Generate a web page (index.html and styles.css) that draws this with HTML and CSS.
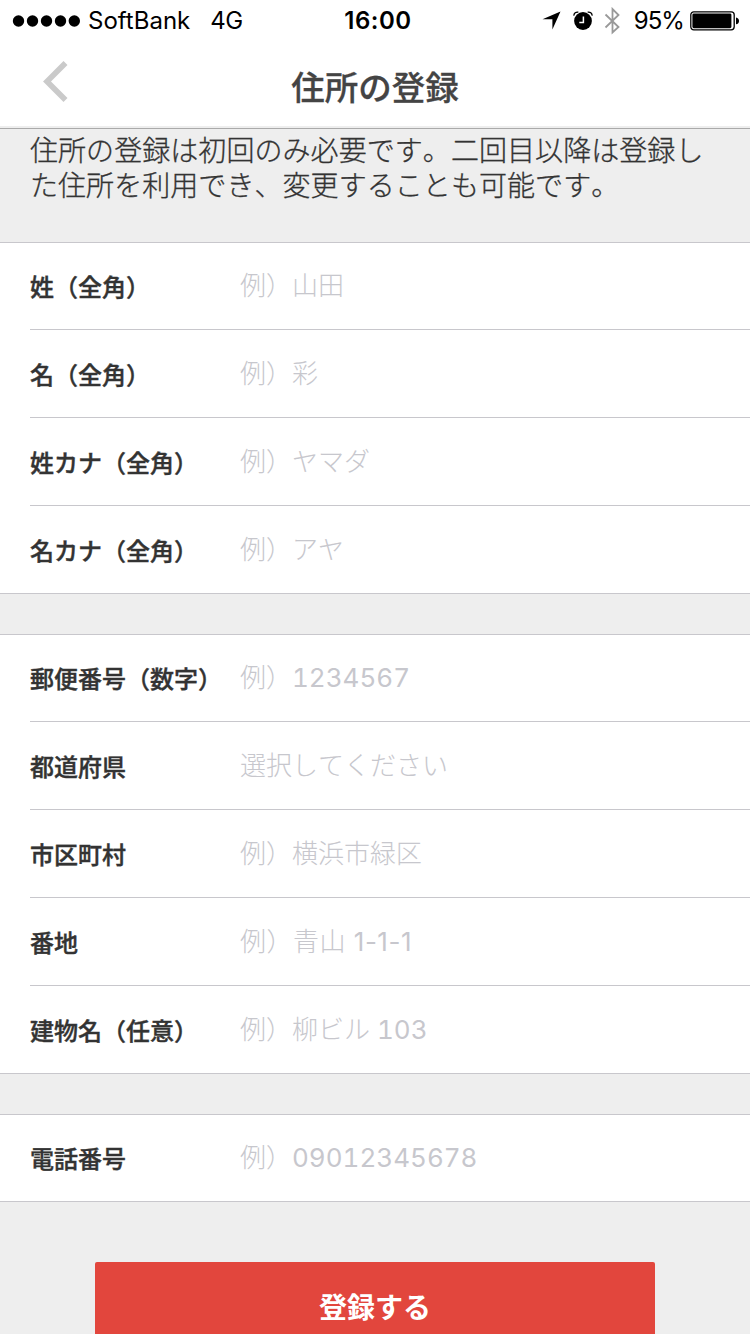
FILE: index.html
```html
<!DOCTYPE html>
<html lang="ja">
<head>
  <meta charset="UTF-8" />
  <meta name="viewport" content="width=device-width, initial-scale=1.0" />
  <title>住所の登録</title>
  <link rel="stylesheet" href="styles.css">
</head>
<body>
  <div class="screen">
    <header class="header">
      <!-- Status bar -->
      <div class="status-bar">
        <div class="status-left">
          <svg class="signal" width="68" height="12" viewBox="0 0 68 12">
            <circle cx="6.5" cy="6" r="5.7"/><circle cx="20.5" cy="6" r="5.7"/><circle cx="34.5" cy="6" r="5.7"/><circle cx="48.5" cy="6" r="5.7"/><circle cx="62.3" cy="6" r="5.7"/>
          </svg>
          <span class="carrier">SoftBank</span>
          <span class="network">4G</span>
        </div>
        <div class="clock">16:00</div>
        <div class="status-right">
          <svg class="icon-location" width="19" height="19" viewBox="0 0 19 19"><path d="M18.5 0.5L0.5 8.3H10.4V18.5Z"/></svg>
          <svg class="icon-alarm" width="20" height="20" viewBox="0 0 20 20">
            <circle cx="10" cy="10" r="8.9"/>
            <path d="M0.9 4.6C0.8 2.2 3 0.7 5.3 1.2M14.7 1.2C17 0.7 19.2 2.2 19.1 4.6" fill="none" stroke="#000" stroke-width="1.4"/>
            <path d="M10.4 5.5V11.4H6.3" fill="none" stroke="#fff" stroke-width="1.5"/>
          </svg>
          <svg class="icon-bluetooth" width="17" height="28" viewBox="0 0 17 28"><path d="M1.5 7.5L14.5 20L8.5 25.5V2L14.5 8L1.5 20.5" fill="none" stroke="#999" stroke-width="1.8"/></svg>
          <span class="battery-level">95%</span>
          <svg class="icon-battery" width="49" height="20" viewBox="0 0 49 20">
            <rect x="0.8" y="0.8" width="43.4" height="18" rx="3" fill="none" stroke="#000" stroke-width="1.3"/>
            <rect x="2.4" y="2.4" width="39" height="14.8" rx="1.4"/>
            <path d="M46 6.5C48 6.8 49 8.3 49 9.9S48 13 46 13.3Z"/>
          </svg>
        </div>
      </div>
      <!-- Navigation -->
      <div class="nav-bar">
        <a class="back" href="#" aria-label="戻る">
          <svg width="26" height="42" viewBox="0 0 26 42"><path d="M22.5 2L4 20.4L22.5 39" fill="none" stroke="#cacaca" stroke-width="5.6"/></svg>
        </a>
        <h1>住所の登録</h1>
      </div>
    </header>

    <p class="intro">住所の登録は初回のみ必要です。二回目以降は登録した住所を利用でき、変更することも可能です。</p>

    <form class="address-form">
      <div class="group">
        <label class="row"><span>姓（全角）</span><input type="text" placeholder="例）山田"></label>
        <label class="row"><span>名（全角）</span><input type="text" placeholder="例）彩"></label>
        <label class="row"><span>姓カナ（全角）</span><input type="text" placeholder="例）ヤマダ"></label>
        <label class="row"><span>名カナ（全角）</span><input type="text" placeholder="例）アヤ"></label>
      </div>
      <div class="group">
        <label class="row"><span>郵便番号（数字）</span><input class="digits" type="text" placeholder="例）1234567"></label>
        <label class="row"><span>都道府県</span><input type="text" placeholder="選択してください"></label>
        <label class="row"><span>市区町村</span><input type="text" placeholder="例）横浜市緑区"></label>
        <label class="row"><span>番地</span><input class="block-number" type="text" placeholder="例）青山 1-1-1"></label>
        <label class="row"><span>建物名（任意）</span><input class="digits" type="text" placeholder="例）柳ビル 103"></label>
      </div>
      <div class="group">
        <label class="row"><span>電話番号</span><input class="digits" type="tel" placeholder="例）09012345678"></label>
      </div>
      <button class="submit" type="button">登録する</button>
    </form>
  </div>
</body>
</html>
```

FILE: styles.css
```css
* { box-sizing: border-box; margin: 0; padding: 0; }
body { font-family: Inter, "Noto Sans CJK JP", sans-serif; background: #eee; color: #333; }

.screen { width: 750px; height: 1334px; overflow: hidden; background: #eee; }

/* Header */
.header { height: 129px; background: linear-gradient(#fff 126px, #eee 126px); border-bottom: 1px solid #aaa; }
.status-bar { display: grid; grid-template-columns: 1fr auto 1fr; align-items: center; height: 41px; padding: 0 11px 0 12px; font-size: 24px; line-height: 40px; color: #000; }
.status-left, .status-right { display: flex; align-items: center; }
.status-right { justify-content: flex-end; }
.status-bar span, .clock { padding-top: 1px; }
.carrier { margin-left: 8px; }
.network { margin-left: 20px; letter-spacing: -0.4px; }
.clock { padding-left: 5px; font-weight: 600; letter-spacing: 0.5px; }
.icon-alarm { margin-left: 12px; }
.icon-bluetooth { margin-left: 11px; }
.battery-level { margin-left: 13px; letter-spacing: -0.9px; }
.icon-battery { margin-left: 6px; }

.nav-bar { display: grid; grid-template-columns: 120px 1fr 120px; align-items: center; height: 86px; }
.back { display: block; height: 42px; padding-left: 43px; margin-top: -4px; }
.back svg { display: block; }
h1 { font-size: 33.5px; font-weight: 500; line-height: 48px; text-align: center; color: #444; -webkit-text-stroke: 0.3px #444; margin-top: 8px; }

/* Intro */
.intro { height: 113px; padding: 3px 30px 0; font-family: "Noto Sans CJK JP Light", "Noto Sans CJK JP", sans-serif; font-size: 28px; font-weight: 400; line-height: 35px; letter-spacing: 0.06px; font-kerning: none; text-spacing-trim: space-all; -webkit-text-stroke: 0.3px #333; }

/* Form */
.group { background: #fff; border-top: 1px solid #c8c7cc; border-bottom: 1px solid #c8c7cc; margin-bottom: 40px; }
.row { display: flex; align-items: center; height: 88px; margin-left: 30px; border-bottom: 1px solid #c8c7cc; }
.row:first-child { margin-top: -1px; }
.row:last-child { height: 87px; border-bottom: none; }
.row span { width: 210px; padding-bottom: 1px; font-size: 24px; font-weight: 500; white-space: nowrap; font-family: "Noto Sans CJK JP", sans-serif; font-kerning: none; text-spacing-trim: space-all; -webkit-text-stroke: 0.4px #333; }
.row input { flex: 1; min-width: 0; height: 60px; border: none; outline: none; background: transparent; font-family: Inter, "Noto Sans CJK JP Light", "Noto Sans CJK JP", sans-serif; font-size: 26px; font-weight: 400; font-kerning: none; color: #333; }
.row input.digits { font-variant-numeric: tabular-nums; }
.row input.block-number { letter-spacing: 0.5px; }
.row input::placeholder { color: #c7c7cd; opacity: 1; }

.submit { display: block; width: 560px; height: 90px; margin: 60px auto 0; padding-bottom: 2px; border: none; border-radius: 2px; background: #e2463d; color: #fff; font-family: inherit; font-size: 28px; font-weight: 700; }
```
